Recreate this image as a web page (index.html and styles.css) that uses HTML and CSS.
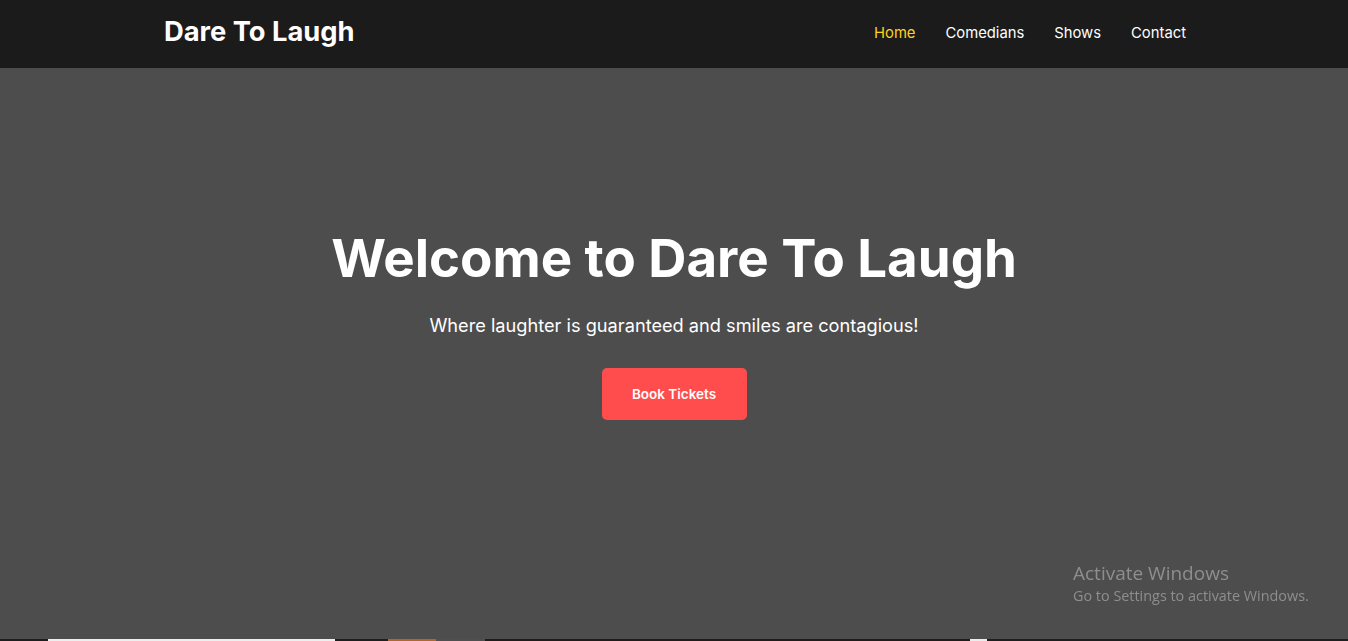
FILE: index.html
```html
<!DOCTYPE html>
<html lang="en">
<head>
<meta charset="UTF-8">
<title>Dare To Laugh</title>
<link rel="stylesheet" href="styles.css">
</head>
<body>
<header class="site-header">
  <div class="container header-inner">
    <a class="logo" href="#">Dare To Laugh</a>
    <nav class="nav">
      <a class="nav-link active" href="#">Home</a>
      <a class="nav-link" href="#">Comedians</a>
      <a class="nav-link" href="#">Shows</a>
      <a class="nav-link" href="#">Contact</a>
    </nav>
  </div>
</header>
<section class="hero">
  <div class="hero-content">
    <h1 class="hero-title">Welcome to Dare To Laugh</h1>
    <p class="hero-sub">Where laughter is guaranteed and smiles are contagious!</p>
    <a class="btn" href="#">Book Tickets</a>
  </div>
</section>
<section class="gallery">
  <div class="tile t1"></div>
  <div class="tile t2"></div>
  <div class="tile t3"></div>
  <div class="tile t4"></div>
  <div class="tile t5"></div>
  <div class="tile t6"></div>
  <div class="tile t7"></div>
  <div class="tile t8"></div>
</section>
<div class="watermark">
  <div class="wm-title">Activate Windows</div>
  <div class="wm-sub">Go to Settings to activate Windows.</div>
</div>
</body>
</html>
```
FILE: styles.css
```css
* { box-sizing: border-box; margin: 0; padding: 0; }
html, body { overflow: hidden; }
body {
  font-family: "Inter", "Open Sans", sans-serif;
  background: #1e1e1e;
  color: #fff;
}
a { text-decoration: none; color: inherit; }
.container {
  max-width: 1100px;
  margin: 0 auto;
  padding: 0 40px;
}
.site-header {
  background: #1b1b1b;
  height: 68px;
}
.header-inner {
  height: 100%;
  display: flex;
  align-items: center;
  justify-content: space-between;
}
.logo {
  font-size: 27.3px;
  font-weight: 700;
  color: #fff;
  padding-bottom: 5px;
}
.nav {
  display: flex;
  gap: 30px;
  padding-bottom: 2px;
  margin-right: -2px;
}
.nav-link {
  font-size: 14.8px;
  font-weight: 400;
  color: #fff;
}
.nav-link.active { color: #ffd21f; }
.hero {
  background: #4d4d4d;
  height: 571px;
  display: flex;
  align-items: center;
  justify-content: center;
  text-align: center;
}
.hero-content {
  display: flex;
  flex-direction: column;
  align-items: center;
  padding-bottom: 60px;
}
.hero-title {
  font-size: 52.8px;
  font-weight: 700;
  line-height: 1.2;
  margin-bottom: 24px;
}
.hero-sub {
  font-size: 18.2px;
  margin-bottom: 32px;
}
.btn {
  display: inline-block;
  background: #ff4d4d;
  color: #fff;
  font-size: 13.5px;
  font-weight: 600;
  width: 145px;
  height: 52px;
  line-height: 52px;
  border-radius: 5px;
}
.gallery {
  display: flex;
  height: 200px;
  background: #1e1e1e;
}
.tile { height: 200px; }
.t1 { width: 48px; background: #1e1e1e; }
.t2 { width: 287px; background: #eeeeee; }
.t3 { width: 53px; background: #1e1e1e; }
.t4 { width: 48px; background: #b5652a; }
.t5 { width: 49px; background: #4f4f4f; }
.t6 { width: 485px; background: #1f1c1a; }
.t7 { width: 17px; background: #ececec; }
.t8 { flex: 1; background: #1e1e1e; }
.watermark {
  position: fixed;
  left: 1073px;
  top: 561px;
  color: #8e8e8e;
  font-family: "Open Sans", "Noto Sans", sans-serif;
}
.wm-title { font-size: 19px; line-height: 24px; }
.wm-sub { font-size: 14.4px; line-height: 22px; }
```
